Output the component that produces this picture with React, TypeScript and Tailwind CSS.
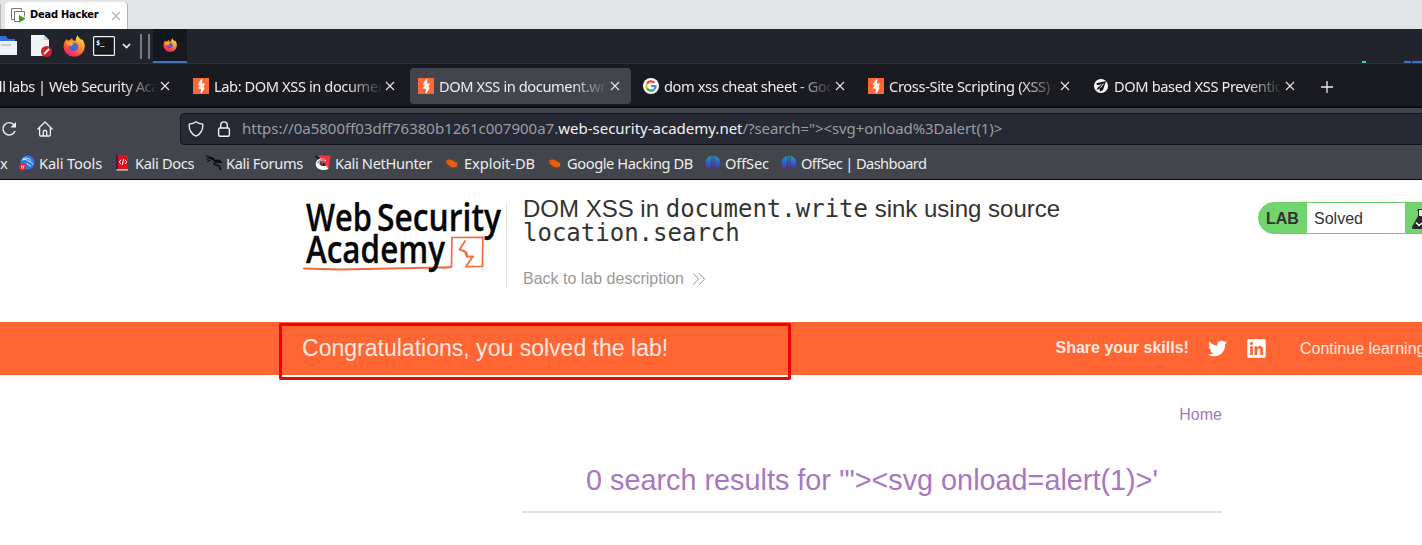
import type { ReactNode } from "react";
import { FaTwitter, FaLinkedin } from "react-icons/fa";

function Burp() {
  return (
    <svg className="h-4 w-4 shrink-0" viewBox="0 0 16 16">
      <rect width="16" height="16" fill="#ff6633" />
      <path d="M8.200 1h1.300L9 5.400l3 .2-1.400 3.200 1 1.100-3 5.300H7.300l1-4.200-4.100-.8 2.700-2.300-2.100-1.500z" fill="#fff" />
      <path d="M8.300 5.200L5.900 7.600M10.500 8.700L7.400 8.900" fill="none" stroke="#ff6633" strokeWidth=".5" />
    </svg>
  );
}

function Google() {
  return (
    <svg className="h-4 w-4 shrink-0" viewBox="0 0 16 16" fill="none" strokeWidth="2.1">
      <circle cx="8" cy="8" r="8" fill="#fff" />
      <path d="M4 5.6A4.7 4.7 0 0 1 11.4 4.8" stroke="#ea4335" />
      <path d="M4 10.4a5 5 0 0 1 0-4.8" stroke="#fbbc05" />
      <path d="M4 10.4a4.7 4.7 0 0 0 7.2 1" stroke="#34a853" />
      <path d="M8 8h4.7a4.7 4.7 0 0 1-1.5 3.4" stroke="#4285f4" />
    </svg>
  );
}

function Owasp() {
  return (
    <svg className="h-4 w-4 shrink-0" viewBox="0 0 16 16">
      <circle cx="8" cy="8" r="7" fill="#fff" />
      <path d="M13 3L3.2 5.2l1.200 2L9 6.2 5 9.2l-1.800 3 3.200-1.700.6 3.200L10 12z" fill="#15161a" />
      <path d="M7.500 9.800l3-4.200" stroke="#fff" strokeWidth=".9" />
    </svg>
  );
}

function Firefox({ className }: { className: string }) {
  return (
    <svg className={className} viewBox="0 0 22 22">
      <defs>
        <linearGradient id="flame" x1=".8" y1="0" x2=".2" y2="1">
          <stop offset="0" stopColor="#ffe14d" />
          <stop offset=".42" stopColor="#ff9328" />
          <stop offset=".75" stopColor="#f94045" />
          <stop offset="1" stopColor="#d7277d" />
        </linearGradient>
      </defs>
      <path d="M3.3 4.2l1.4 1.4 2-.4L9 3.3l1 2.2 2.7.2C12.5 3.5 13.5 1.5 14.8.2c.4 2.3 2.2 3 3.6 4.8l.4-1.1c2.1 2 3 4.600 3 7.300a10.600 10.600 0 1 1-21.200 0C.6 8.700 1.700 6.100 3.300 4.200z" fill="url(#flame)" />
      <path d="M7.400 8.500c2.700-2 7-1.200 7.800 2.300.7 3-1.300 5.400-4.300 5.400-2.800 0-5-2-4.900-4.500z" fill="#5560d8" />
      <path d="M2.500 7.500l4.800-.4 3.500 1.200c-.2 1.600-2 1.500-2.600 3.100-.8-1.100-2.500-.7-3.500-1.200z" fill="#ffad2b" />
    </svg>
  );
}

type Tab = { title: string; icon: ReactNode; spacing: string; active?: boolean };
const tabs: Tab[] = [
  { title: "All labs | Web Security Academy", icon: <Burp />, spacing: "tracking-[-0.5px] pl-px" },
  { title: "Lab: DOM XSS in document.write", icon: <Burp />, spacing: "tracking-[-0.42px]" },
  { title: "DOM XSS in document.write", icon: <Burp />, spacing: "tracking-[-0.42px]", active: true },
  { title: "dom xss cheat sheet - Google", icon: <Google />, spacing: "tracking-[-0.42px]" },
  { title: "Cross-Site Scripting (XSS) Ch", icon: <Burp />, spacing: "tracking-[-0.36px]" },
  { title: "DOM based XSS Prevention", icon: <Owasp />, spacing: "tracking-[-0.4px]" },
];

function BrowserTab({ title, icon, spacing, active }: Tab) {
  return (
    <div className={active ? "mr-1 flex h-9 w-[221px] shrink-0 items-center rounded bg-[#42454c] pl-2" : "mr-1 flex h-9 w-[221px] shrink-0 items-center pl-2"}>
      {icon}
      <div className={`ml-[5px] w-[166px] overflow-hidden whitespace-nowrap [mask-image:linear-gradient(to_right,black_80%,transparent_102%)] ${spacing}`}>{title}</div>
      <svg className="ml-[5px] h-2.5 w-2.5 shrink-0" viewBox="0 0 10 10" stroke="#e8e8ea" strokeWidth="1.1">
        <path d="M1 1l8 8M9 1L1 9" />
      </svg>
    </div>
  );
}

function Bug() {
  return (
    <svg className="h-4 w-4" viewBox="0 0 16 16" fill="#e8620c">
      <path d="M2.500 5.200C5 4 8 4.500 10 6.500c2 .3 3.300 1.500 3.500 3.500L12 12c-3 1-6 .3-7.500-2C3 9 2 7 2.500 5.200z" />
      <path d="M1 5.500l4 1M4 3l3 3M10 4l1 3M14 7l-3 1M1 9l4-1M5 13l2-3M9 14l0-3M12 12l2.500 1" stroke="#a9501f" strokeWidth=".5" />
    </svg>
  );
}

function OffSec() {
  return (
    <svg className="h-4 w-4" viewBox="0 0 16 16">
      <defs>
        <linearGradient id="offsec" x1="0" y1="0" x2="0" y2="1">
          <stop offset="0" stopColor="#16a6b8" />
          <stop offset=".5" stopColor="#3159c9" />
          <stop offset="1" stopColor="#6b22c8" />
        </linearGradient>
      </defs>
      <path d="M6.400.8C2.500 1.800.5 5 .6 8c.1 2.200 1 4 2.500 5 2-.5 3.200-2 3.300-4zM9.600.8c3.900 1 5.900 4.200 5.800 7.200-.1 2.200-1 4-2.500 5-2-.5-3.200-2-3.300-4zM7.400.7h1.200v14.800H7.400z" fill="url(#offsec)" />
    </svg>
  );
}

const toolsIcon = (
  <svg className="h-4 w-4" viewBox="0 0 16 16">
    <circle cx="8.500" cy="7.500" r="7" fill="#2d7bea" />
    <path d="M3 5c3-1 5-.5 7 1.500 2 .2 3 1 4 3M4 3.500c4-1 6 0 8 2M8 8c0 2 2 2 4 3" fill="none" stroke="#dcecff" strokeWidth="1" />
    <circle cx="3.600" cy="12" r="3.600" fill="#e2252b" />
    <path d="M1.900 11h3.600M2.700 11v2.700M4.600 11v2.700" stroke="#fff" strokeWidth=".8" />
  </svg>
);
const docsIcon = (
  <svg className="h-4 w-4" viewBox="0 0 16 16">
    <path d="M1 0h2.500v15H1z" fill="#292657" />
    <path d="M3 0h10v14H3z" fill="#e01219" />
    <path d="M1.500 14.300H13v1.200H1.500z" fill="#eee" />
    <path d="M6 4.800L4.200 7 6 9M10 4.800L11.800 7 10 9M8.700 4l-1.400 6" fill="none" stroke="#fff" strokeWidth="1" />
  </svg>
);
const forumsIcon = (
  <svg className="h-4 w-4" viewBox="0 0 16 16" fill="none" stroke="#090a0c">
    <path d="M0 1.200l4 .8 4 2.300M.3 4l4-.8 3.800 2M1 6.800l3.500-1.800" strokeWidth="1.200" />
    <path d="M5 2.800c2.300.3 2.700 2.300 4.200 2.700 2.800-.9 4.600-.2 6.100 1.800L13 7.100c-3.200-.5-5 .2-4.800 2 .3 1.500 4.800.2 5.600 3l.8 3" strokeWidth="1.500" />
  </svg>
);
const hunterIcon = (
  <svg className="h-4 w-4" viewBox="0 0 16 16">
    <path d="M3 .5h12.500L14 12.500 8 10z" fill="#f0343f" />
    <path d="M.5 1l4 3M8 9l5 5" stroke="#18191d" strokeWidth="2" />
    <path d="M.8 8.500C1.500 3 9 1.500 11.500 6.500 8.500 5 5 5 4.500 8c-.2 3 4 4 7.500 2l2 3.500C8 17 0 14 .8 8.500z" fill="#fff" />
    <path d="M3 8.500C3.500 5 7 4 9.500 5.200M8.500 8l6 6" fill="none" stroke="#18191d" strokeWidth=".8" />
  </svg>
);

const bookmarks: { label: string; icon: ReactNode; box: string }[] = [
  { label: "Kali Tools", icon: toolsIcon, box: "w-[96px] tracking-[-0.12px]" },
  { label: "Kali Docs", icon: docsIcon, box: "w-[91px] tracking-[-0.35px]" },
  { label: "Kali Forums", icon: forumsIcon, box: "w-[109px] tracking-[-0.36px]" },
  { label: "Kali NetHunter", icon: hunterIcon, box: "w-[129px] tracking-[-0.36px]" },
  { label: "Exploit-DB", icon: <Bug />, box: "w-[103px] tracking-[-0.05px]" },
  { label: "Google Hacking DB", icon: <Bug />, box: "w-[158px] tracking-[-0.42px]" },
  { label: "OffSec", icon: <OffSec />, box: "w-[76px] tracking-[-0.15px]" },
  { label: "OffSec | Dashboard", icon: <OffSec />, box: "w-[160px] tracking-[-0.62px]" },
];

function MachineTabs() {
  return (
    <div className="flex h-[29px] items-end bg-[#e3e4e6]">
      <div className="h-[25px] w-px bg-[#b8b8b8]" />
      <div className="ml-1 flex h-[27px] w-[123px] items-center rounded-t border-r border-[#b0b0b0] bg-white pl-1.5">
        <svg className="h-4 w-4 shrink-0" viewBox="0 0 16 16" fill="none" stroke="#777">
          <path d="M3 11.500H.5V.5h10v2" />
          <path d="M8 13.500H3.500v-10h10v5" fill="#fff" />
          <path d="M8 7l6.500 3.800L8 14.700z" fill="#3f9c1c" stroke="none" />
        </svg>
        <b className="ml-[3px] w-[73px] shrink-0 whitespace-nowrap font-['DejaVu_Sans_Condensed','DejaVu_Sans',sans-serif] text-[11px] tracking-[-0.22px] text-black [font-stretch:condensed]">Dead Hacker</b>
        <svg className="ml-2 h-2.5 w-2.5 shrink-0" viewBox="0 0 10 10" stroke="#bbb" strokeWidth="1.600"><path d="M1 1l8 8M9 1L1 9" /></svg>
      </div>
    </div>
  );
}

function Panel() {
  return (
    <div className="flex h-[35px] items-center border-b border-[#30323a] bg-[#22242d]">
      <svg className="h-5 w-[17px]" viewBox="0 0 17 20">
        <path d="M0 0h6l2 3h7v5H0z" fill="#2e73dc" />
        <path d="M0 5h17v14H0z" fill="#edf0f6" />
        <path d="M1 9h10" stroke="#b7bfd0" strokeWidth="1.500" />
      </svg>
      <svg className="ml-3.5 h-[22px] w-[21px]" viewBox="0 0 21 22">
        <path d="M0 0h13l5 5v16H0z" fill="#f1f2f4" />
        <path d="M13 0v5h5z" fill="#c8ccd1" />
        <circle cx="15.500" cy="16.500" r="5.500" fill="#cf1f28" />
        <path d="M13 19l5-5" stroke="#fff" strokeWidth="1.800" />
      </svg>
      <Firefox className="ml-[11px] h-[22px] w-[22px]" />
      <svg className="ml-2 h-5 w-[22px]" viewBox="0 0 22 20">
        <rect x=".6" y=".6" width="20.800" height="18.800" rx="1" fill="#15171b" stroke="#f2f2f2" strokeWidth="1.200" />
        <text x="3" y="9" fill="#fff" fontSize="7" fontWeight="700" fontFamily="DejaVu Sans Mono, monospace">$_</text>
      </svg>
      <svg className="ml-[7px] h-[6px] w-[9px]" viewBox="0 0 9 6" fill="none" stroke="#f0f0f0" strokeWidth="1.700"><path d="M1 1l3.500 3.500L8 1" /></svg>
      <div className="ml-[9px] h-[25px] w-[10px] border-x-2 border-[#777a80]" />
      <div className="ml-[3px] flex h-[34px] w-[34px] items-center justify-center border-b-2 border-[#4571c4] bg-[#16181f]">
        <Firefox className="h-3.5 w-3.5" />
      </div>
      <div className="ml-auto flex items-end self-end">
        <div className="mr-[38px] h-0.5 w-1 bg-[#38d5b0]" />
        <div className="mr-px h-0.5 w-[7px] bg-[#4571c4]" />
        <div className="h-0.5 w-[10px] bg-[#4571c4]" />
      </div>
    </div>
  );
}

function AddressBar() {
  return (
    <div className="flex h-[41px] items-center">
      <svg className="ml-[1px] h-4 w-4 shrink-0" viewBox="0 0 16 16" fill="none" stroke="#f0f0f2" strokeWidth="1.400">
        <path d="M14 10a6.200 6.200 0 1 1-1.300-6.500L14 5" />
        <path d="M15 1v5.500H9.500z" fill="#f0f0f2" stroke="none" />
      </svg>
      <svg className="ml-5 h-4 w-4 shrink-0" viewBox="0 0 16 16" fill="none" stroke="#f0f0f2" strokeWidth="1.300" strokeLinejoin="round" strokeLinecap="round">
        <path d="M.9 8L8 1l7.100 7M2.600 7v6.700q0 1.300 1.300 1.300h8.200q1.300 0 1.300-1.300V7M6.300 15v-4.500q0-1 1-1h1.400q1 0 1 1V15" />
      </svg>
      <div className="ml-[127px] flex h-8 w-[1300px] shrink-0 items-center rounded border border-[#111218] bg-[#272934] pl-[7px] text-[15px] text-[#9b9ca2]">
        <svg className="h-4 w-4" viewBox="0 0 16 16" fill="none" stroke="#f0f0f2" strokeWidth="1.300" strokeLinejoin="round">
          <path d="M8 .8C6.300 2.200 3.500 3 1.200 3.100c-.3 6 2 10 6.800 12.100 4.800-2.100 7.100-6.100 6.800-12.100C12.500 3 9.700 2.200 8 .8z" />
        </svg>
        <svg className="ml-3 h-4 w-4" viewBox="0 0 16 16" fill="none" stroke="#f0f0f2" strokeWidth="1.400">
          <rect x="2.600" y="7" width="10.800" height="8.200" rx="1.500" />
          <path d="M4.700 7V4.200a3.300 3.300 0 0 1 6.600 0V7" />
        </svg>
        <div className="ml-2.5 whitespace-nowrap">
          <span>https://0a5800ff03dff76380b1261c007900a7.</span>
          <span className="text-[#f2f2f4]">web-security-academy.net</span>
          <span className="tracking-[-0.08px]">/?search="&gt;&lt;svg+onload%3Dalert(1)&gt;</span>
        </div>
      </div>
    </div>
  );
}

function AcademyLogo() {
  return (
    <svg className="h-[90px] w-[204px] shrink-0" viewBox="0 0 204 90">
      <g fill="none" stroke="#f36a40" strokeLinejoin="round" strokeLinecap="round">
        <path d="M2 66.500l36 1 76-1.500 34-.7" strokeWidth="2" />
        <path d="M140 66l9.500-1 .4-29.500 31-.2-.5 29-16.500.3 7-10h-6l-2-5-5.500-2.200 5.800-8.400" strokeWidth="1.700" />
        <path d="M157.500 47.500l7 2.500 1 4.500h6" strokeWidth="1.500" />
      </g>
      <g fontFamily="Open Sans, sans-serif" fontSize="37" fontWeight="600" fill="#060606" stroke="#060606" strokeWidth=".3">
        <text x="4" y="29" textLength="66" lengthAdjust="spacingAndGlyphs">Web</text>
        <text x="75" y="29" textLength="124" lengthAdjust="spacingAndGlyphs">Security</text>
        <text x="4" y="61" textLength="139" lengthAdjust="spacingAndGlyphs">Academy</text>
      </g>
    </svg>
  );
}

function LabHeader() {
  return (
    <header className="flex h-[142px] items-start pl-[302px] pt-[22px]">
      <AcademyLogo />
      <div className="h-[87px] w-px shrink-0 bg-[#e4e4e4]" />
      <div className="ml-4 mt-[-5px] w-[600px] shrink-0">
        <h1 className="text-[24px] leading-6 text-[#333332]">
          DOM XSS in <code className="font-['DejaVu_Sans_Mono',monospace]">document.write</code> sink using source<br />
          <code className="font-['DejaVu_Sans_Mono',monospace]">location.search</code>
        </h1>
        <div className="mt-[22px] flex items-center text-[16px] leading-6 text-[#999]">
          Back to lab description
          <svg className="ml-2 h-3 w-[14px]" viewBox="0 0 14 12" fill="none" stroke="#999"><path d="M1.500.5l5 5.500-5 5.500M7.500.5l5 5.500-5 5.500" /></svg>
        </div>
      </div>
      <div className="ml-[135px] flex h-8 w-[200px] shrink-0 rounded-l-full border border-[#6fcf6a] bg-[#72d46d] text-[16px] text-[#333332]">
        <b className="flex w-12 items-center pl-[7px] pt-0.5">LAB</b>
        <div className="flex w-[98px] items-center bg-white pl-[7px] pt-px">Solved</div>
        <svg className="ml-1.5 mt-[5px] h-[22px] w-[22px]" viewBox="0 0 22 22">
          <path d="M7 1h9v2h-1v6l6 10q.5 2-1.500 2h-17Q.5 21 1 19L7 8V3H6z" fill="#292c2c" />
          <path d="M8 2h6v6H8z" fill="#dff5de" />
          <path d="M5 14.500l3 3 5-4" fill="none" stroke="#fff" strokeWidth="1.500" />
        </svg>
      </div>
    </header>
  );
}

export default function App() {
  return (
    <div className="h-[545px] w-[1422px] overflow-hidden bg-white font-['Liberation_Sans',Arial,sans-serif]">
      <MachineTabs />
      <div className="font-['Noto_Sans',sans-serif] text-[14.67px] text-[#ededf0]">
        <Panel />
        <div className="flex h-11 items-start border-b-2 border-[#0c0d12] bg-[#1a1b20] pt-1">
          <div className="-ml-10 flex shrink-0">
            {tabs.map((t) => <BrowserTab key={t.title} {...t} />)}
          </div>
          <svg className="ml-[11px] mt-[13px] h-3 w-3" viewBox="0 0 12 12" stroke="#ededf0" strokeWidth="1.300"><path d="M6 0v12M0 6h12" /></svg>
        </div>
        <div className="h-[72px] border-b border-[#08090c] bg-[#42454c]">
          <AddressBar />
          <div className="flex h-7 items-center">
            <span className="w-[19px] shrink-0">x</span>
            {bookmarks.map((b) => (
              <div key={b.label} className={`flex shrink-0 items-center gap-1 whitespace-nowrap ${b.box}`}>
                <span className="shrink-0">{b.icon}</span>
                {b.label}
              </div>
            ))}
          </div>
        </div>
      </div>
      <LabHeader />
      <section className="relative flex h-[53px] items-center bg-[#ff6633] pl-[302px] text-[#ffe9e0]">
        <div className="w-[753px] shrink-0 whitespace-nowrap text-[23.04px]">Congratulations, you solved the lab!</div>
        <b className="w-[152px] shrink-0 pb-px pl-[0.5px] text-[16px]">Share your skills!</b>
        <FaTwitter className="ml-px h-[19px] w-[19px] shrink-0 text-white" />
        <FaLinkedin className="ml-[19px] h-[21px] w-[21px] shrink-0 text-white" />
        <div className="ml-[33px] whitespace-nowrap text-[16px]">Continue learning</div>
        <div className="absolute left-[279px] top-px h-[57px] w-[512px] rounded-[2px] border-[3px] border-[#f00000] border-b-[#dc0c0c]" />
      </section>
      <main className="ml-[522px] w-[700px] text-[#a877bd]">
        <div className="pt-7 text-right text-[16px] leading-6">Home</div>
        <h2 className="mt-8 flex h-[54px] items-start justify-center whitespace-nowrap border-b-2 border-[#e2e2e2] text-[28.8px] leading-[42px]">0 search results for '"&gt;&lt;svg onload=alert(1)&gt;'</h2>
      </main>
    </div>
  );
}
